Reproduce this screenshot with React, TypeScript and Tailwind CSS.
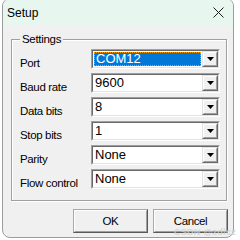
import React from "react";

const rows: { label: string; value: string; focused?: boolean }[] = [
  { label: "Port", value: "COM12", focused: true },
  { label: "Baud rate", value: "9600" },
  { label: "Data bits", value: "8" },
  { label: "Stop bits", value: "1" },
  { label: "Parity", value: "None" },
  { label: "Flow control", value: "None" },
];

function Combo({ value, focused }: { value: string; focused?: boolean }) {
  return (
    <div className="w-[129px] h-[20px] border border-t-[#a0a0a0] border-l-[#a0a0a0] border-r-white border-b-white">
      <div className="w-full h-full border border-t-[#696969] border-l-[#696969] border-r-[#e3e3e3] border-b-[#e3e3e3] bg-white flex">
        {focused ? (
          <div className="flex-1 m-[1px] bg-black">
            <div className="w-full h-full border border-dotted border-[#ff9d00] bg-[#0078d7] text-white text-[13px] leading-[12px] pl-[1px] flex items-center">
              {value}
            </div>
          </div>
        ) : (
          <div className="flex-1 pl-[2px] text-[13px] leading-[16px] text-black flex items-center">{value}</div>
        )}
        <div className="w-[16px] h-[16px] border border-t-[#e3e3e3] border-l-[#e3e3e3] border-r-[#696969] border-b-[#696969] bg-[#f0f0f0]">
          <div className="w-full h-full border border-t-white border-l-white border-r-[#a0a0a0] border-b-[#a0a0a0] flex items-center justify-center">
            <svg width="7" height="4" viewBox="0 0 7 4">
              <path d="M0 0H7L3.5 4Z" fill="#000" />
            </svg>
          </div>
        </div>
      </div>
    </div>
  );
}

function Btn({ children }: { children: React.ReactNode }) {
  return (
    <div className="w-[75px] h-[24px] border border-t-[#a8a8a8] border-l-[#a8a8a8] border-r-[#5a5a5a] border-b-[#5a5a5a] bg-[#f0f0f0]">
      <div className="w-full h-full border border-t-white border-l-white border-r-[#a0a0a0] border-b-[#a0a0a0] flex items-center justify-center text-[11.5px] leading-[14px] tracking-[-0.4px] text-black">
        {children}
      </div>
    </div>
  );
}

export default function App() {
  return (
    <div
      className="w-[240px] h-[240px] bg-white overflow-hidden relative"
      style={{ fontFamily: '"Liberation Sans", Arial, sans-serif' }}
    >
      <div className="ml-[2px] mt-[-2px] w-[232px] h-[240px] border border-[#9c9c9c] rounded-[8px] overflow-hidden bg-[#f0f0f0] flex flex-col">
        <div className="h-[26px] shrink-0 bg-[#e7f6ef] flex items-center justify-between pl-[4px] pr-[9px] pt-[2px]">
          <span className="text-[12px] text-black">Setup</span>
          <svg width="11" height="11" viewBox="0 0 11 11" className="mb-[1px]">
            <path d="M0.5 0.5L10.5 10.5M10.5 0.5L0.5 10.5" stroke="#1c1c1c" strokeWidth="1" />
          </svg>
        </div>
        <div className="flex-1 flex flex-col">
          <div className="relative ml-[8px] mt-[14px] w-[216px] h-[162px] border border-[#a0a0a0] shadow-[inset_1px_1px_0_#fff,1px_1px_0_#fff]">
            <span className="absolute left-[8px] top-[-8px] px-[2px] bg-[#f0f0f0] text-[11.5px] leading-[14px] tracking-[-0.3px] text-black">
              Settings
            </span>
            <div className="flex flex-col gap-[4px] pt-[9px] pl-[8px]">
              {rows.map((r) => (
                <div key={r.label} className="flex items-start h-[20px]">
                  <div className="w-[71px] pt-[7px] text-[11.5px] leading-[14px] tracking-[-0.35px] text-black whitespace-nowrap">
                    {r.label}
                  </div>
                  <Combo value={r.value} focused={r.focused} />
                </div>
              ))}
            </div>
          </div>
          <div className="flex justify-end gap-[5px] mt-[8px] mr-[5px]">
            <Btn>OK</Btn>
            <Btn>Cancel</Btn>
          </div>
        </div>
      </div>
      <div className="absolute right-[4px] bottom-[3px] text-[9px] leading-[9px] font-bold text-[#d0d0d0] opacity-80 tracking-[0.3px]">
        CSDN @zdlcz
      </div>
    </div>
  );
}
